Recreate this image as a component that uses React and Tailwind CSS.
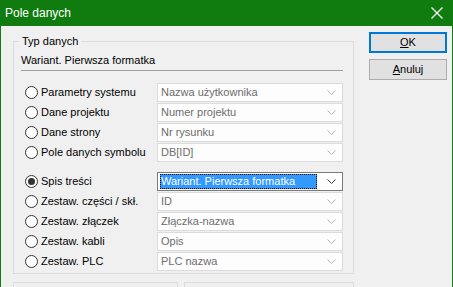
const fixedRows = [
  { label: 'Parametry systemu', value: 'Nazwa użytkownika' },
  { label: 'Dane projektu', value: 'Numer projektu' },
  { label: 'Dane strony', value: 'Nr rysunku' },
  { label: 'Pole danych symbolu', value: 'DB[ID]' },
]

const listRows = [
  { label: 'Spis treści', value: 'Wariant. Pierwsza formatka', checked: true },
  { label: 'Zestaw. części / skł.', value: 'ID' },
  { label: 'Zestaw. złączek', value: 'Złączka-nazwa' },
  { label: 'Zestaw. kabli', value: 'Opis' },
  { label: 'Zestaw. PLC', value: 'PLC nazwa' },
]

const Chevron = ({ dark }) => (
  <svg width="9" height="5" viewBox="0 0 9 5" className="shrink-0">
    <path d="M0.5 0.5 L4.5 4.5 L8.5 0.5" fill="none" stroke={dark ? '#333333' : '#b4b4b4'} strokeWidth="1" />
  </svg>
)

const Radio = ({ checked }) => (
  <span className="w-[13px] h-[13px] rounded-full border border-[#333333] bg-white flex items-center justify-center shrink-0">
    {checked && <span className="w-[7px] h-[7px] rounded-full bg-[#333333]" />}
  </span>
)

const Row = ({ label, value, checked }) => (
  <div className="flex items-center h-[19px]">
    <div className="w-[143px] flex items-center gap-[3px] pl-[11px] whitespace-nowrap">
      <Radio checked={checked} />
      <span className="text-black">{label}</span>
    </div>
    {checked ? (
      <div className="w-[186px] h-[19px] border border-[#7a7a7a] bg-white flex items-center pl-[2px] pr-[6px]">
        <span className="flex-1 h-[15px] bg-[#3399ff] text-white leading-[15px] pl-[1px] outline outline-1 outline-dotted outline-[#000000] -outline-offset-1">
          {value}
        </span>
        <span className="w-[10px]" />
        <Chevron dark />
      </div>
    ) : (
      <div className="w-[186px] h-[19px] border border-[#dcdcdc] bg-[#fdfdfd] flex items-center pl-[3px] pr-[6px]">
        <span className="flex-1 text-[#6d6d6d]">{value}</span>
        <Chevron />
      </div>
    )}
  </div>
)

export default function App() {
  return (
    <div
      className="w-[453px] h-[287px] bg-[#f0f0f0] border-x border-[#107c10] overflow-hidden flex flex-col text-[11px]"
      style={{ fontFamily: '"Liberation Sans", Arial, sans-serif' }}
    >
      {/* Title bar */}
      <div className="h-[26px] bg-[#107c10] flex items-center justify-between pl-[4px] pr-[9px] shrink-0">
        <span className="text-white text-[12px]">Pole danych</span>
        <svg width="12" height="12" viewBox="0 0 12 12">
          <path d="M0.5 0.5 L11.5 11.5 M11.5 0.5 L0.5 11.5" stroke="#ffffff" strokeWidth="1.2" />
        </svg>
      </div>

      <div className="flex">
        {/* Left side */}
        <div className="pl-[12px] pt-[15px] flex flex-col">
          <div className="relative w-[341px] h-[233px] border border-[#dcdcdc] pl-[7px] pt-[11px]">
            <span className="absolute left-[5px] top-[-8px] px-[3px] bg-[#f0f0f0] text-black leading-[14px]">Typ danych</span>
            <div className="w-[322px] border-b border-[#a0a0a0] pb-[3px] leading-[14px] text-black">
              Wariant. Pierwsza formatka
            </div>
            <div className="mt-[12px] flex flex-col gap-[1px] -ml-[7px]">
              {fixedRows.map((r) => (
                <Row key={r.label} {...r} />
              ))}
            </div>
            <div className="mt-[10px] flex flex-col gap-[1px] -ml-[7px]">
              {listRows.map((r) => (
                <Row key={r.label} {...r} />
              ))}
            </div>
          </div>
          <div className="mt-[8px] flex gap-[6px]">
            <div className="w-[165px] h-[20px] border border-[#dcdcdc]" />
            <div className="w-[170px] h-[20px] border border-[#dcdcdc]" />
          </div>
        </div>

        {/* Buttons */}
        <div className="ml-[15px] pt-[6px] flex flex-col gap-[6px]">
          <button className="w-[78px] h-[21px] border-2 border-[#0078d7] bg-[#e1e1e1] text-black">
            <span className="underline">O</span>K
          </button>
          <button className="w-[78px] h-[21px] border border-[#adadad] bg-[#e1e1e1] text-black">
            <span className="underline">A</span>nuluj
          </button>
        </div>
      </div>
    </div>
  )
}
